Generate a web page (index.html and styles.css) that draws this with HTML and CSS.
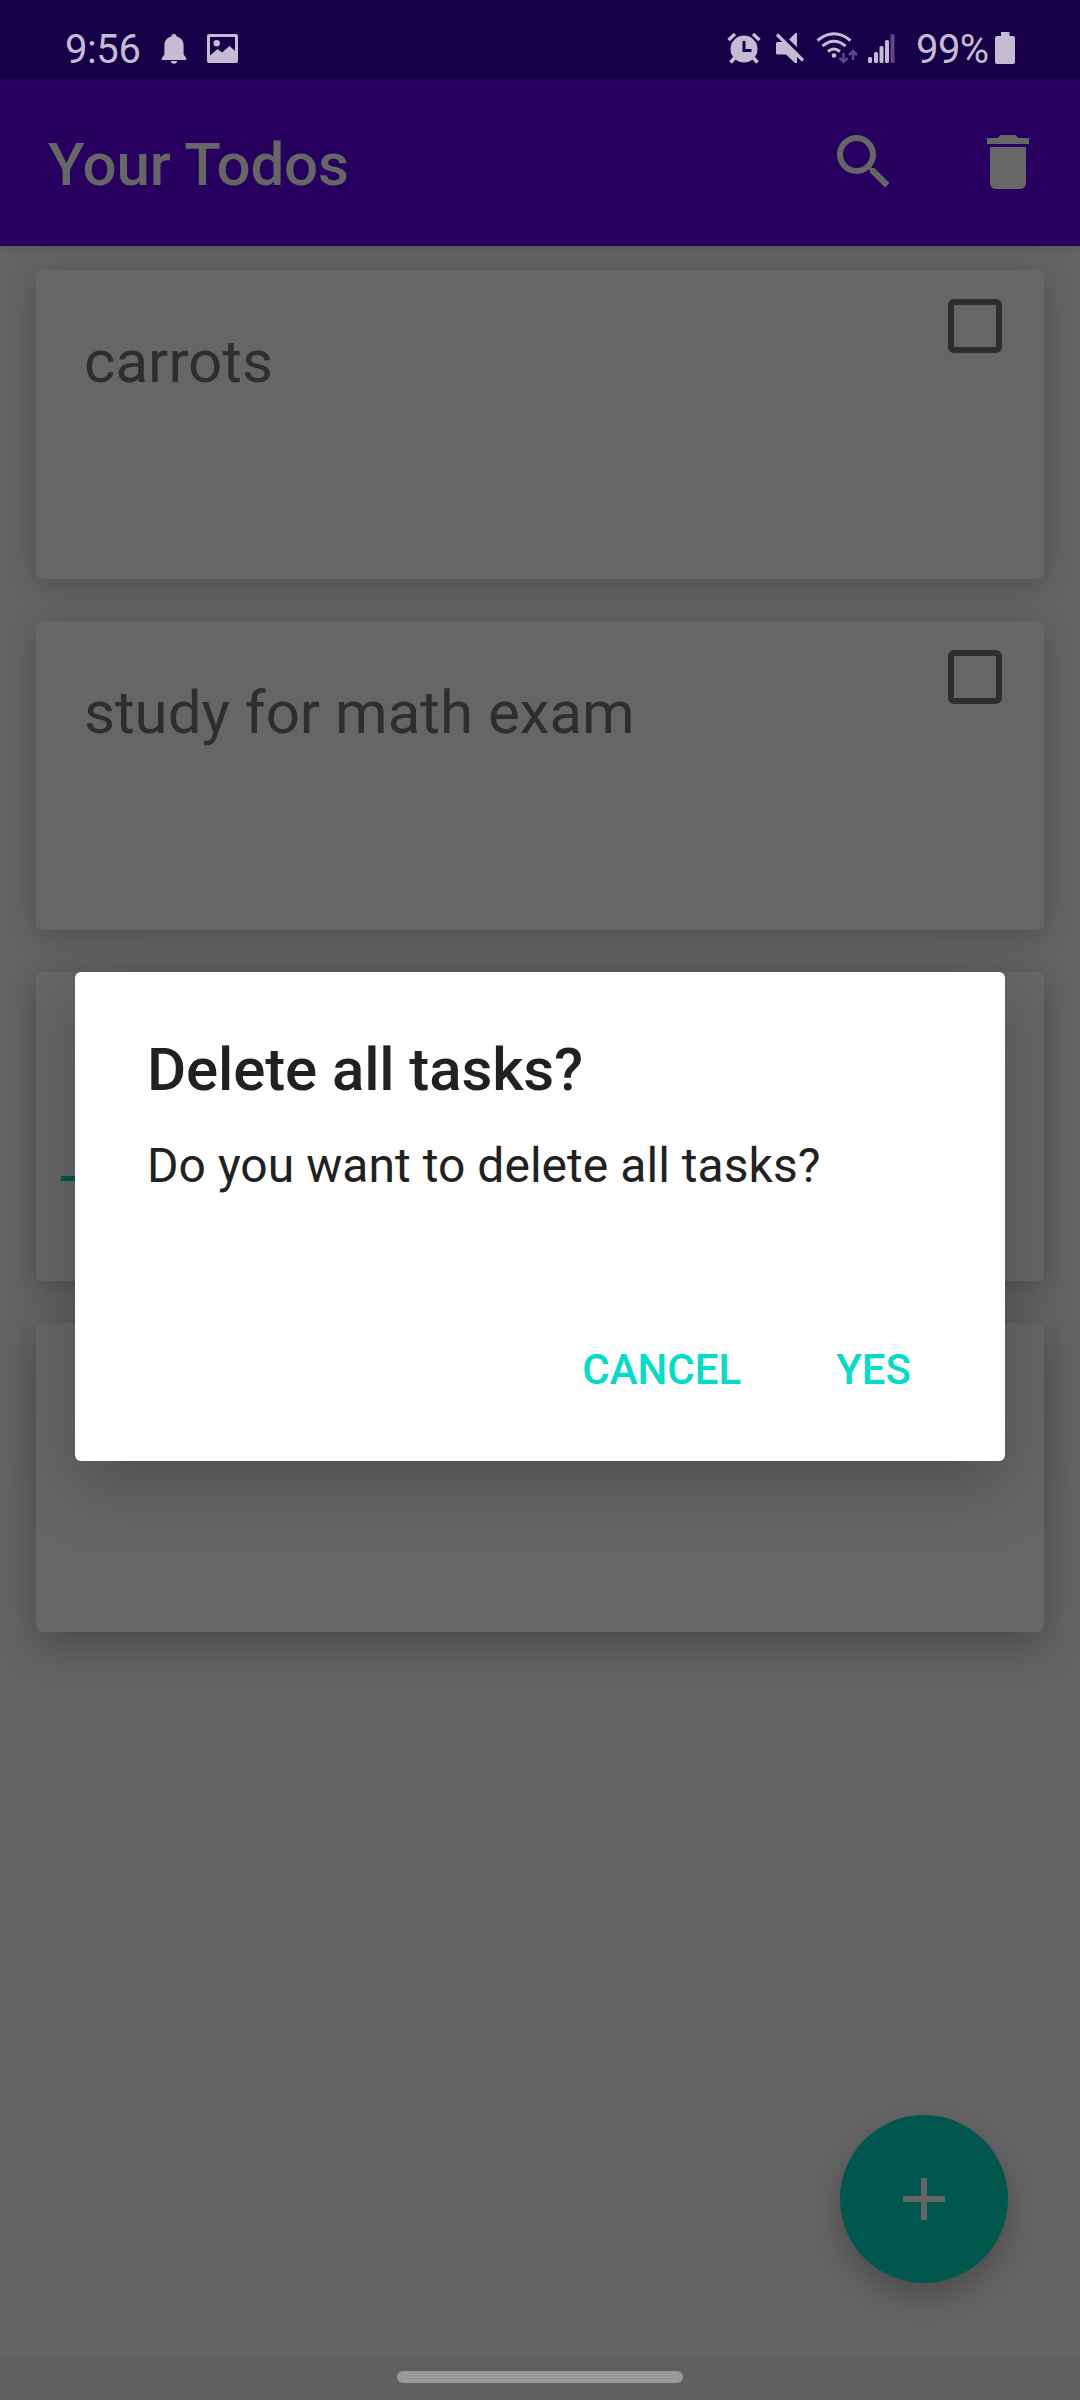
FILE: index.html
```html
<!DOCTYPE html>
<html lang="en">
<head>
<meta charset="utf-8">
<title>Your Todos</title>
<link rel="stylesheet" href="styles.css">
</head>
<body>
<div class="screen">
  <header class="status-bar">
    <span class="clock">9:56</span>
    <svg class="icon-bell" viewBox="0 0 26 30"><path d="M13 0c1.800 0 2.600 1.200 2.600 2.500 4.600 1.100 7 4.600 7 8.700v9.300l2.600 3.500v2H.8v-2l2.600-3.500v-9.300c0-4.100 2.400-7.600 7-8.700C10.400 1.200 11.200 0 13 0zM9.800 27h6.400c0 1.600-1.400 2.700-3.200 2.700S9.800 28.600 9.800 27z"/></svg>
    <svg class="icon-image" viewBox="0 0 31 29"><path fill-rule="evenodd" d="M2 0h27a2 2 0 0 1 2 2v25a2 2 0 0 1-2 2H2a2 2 0 0 1-2-2V2A2 2 0 0 1 2 0zM3 3v18.500l7.500-6.500 4.500 3.500 7.500-6.500 5.500 5V3zM9.700 6a3.200 3.200 0 1 1 0 6.400 3.200 3.200 0 0 1 0-6.400z"/></svg>
    <svg class="status-icons" viewBox="0 0 170 32">
      <g><circle cx="17" cy="17" r="13.500"/><path class="line" d="M1.500 8L8 2M32.500 8L26 2M7.500 26l-4 4.500M26.500 26l4 4.500"/><path class="cut" d="M17 9v9.500h7.500"/></g>
      <path d="M49 11.500a1.500 1.500 0 0 1 1.500-1.500H57L70 23.500V31h-2L59 22.500h-8.500A1.500 1.500 0 0 1 49 21zM62 7.500L68.500 1H70v14z"/><path class="slash" d="M50 2.500L76 28.500"/>
      <path class="arc" d="M90.500 8.500q16.500-13.500 33 0M95.500 14q11.500-9.500 23 0M101 19.500q6-5 12 0"/><circle cx="107" cy="23.500" r="2.300"/>
      <path class="dim-line" d="M116.500 21v9m-4-4l4 4 4-4M126 28v-9m-4 4l4-4 4 4"/>
      <rect x="141" y="25" width="4" height="6" rx="1.500"/><rect x="147" y="20" width="4" height="11" rx="1.500"/><rect x="152.500" y="14" width="4" height="17" rx="1.500"/><rect x="158" y="8" width="4" height="23" rx="1.500"/><rect class="dim" x="163.500" y="2" width="4" height="29" rx="1.500"/>
    </svg>
    <span class="battery-level">99%</span>
    <svg class="icon-battery" viewBox="0 0 20 32"><path d="M6 0h8.500v4H18a2 2 0 0 1 2 2v24a2 2 0 0 1-2 2H2a2 2 0 0 1-2-2V6a2 2 0 0 1 2-2h4z"/></svg>
  </header>
  <div class="app-bar">
    <h1 class="app-title">Your Todos</h1>
    <svg class="action" viewBox="0 0 24 24"><path d="M15.500 14h-.79l-.28-.27A6.471 6.471 0 0 0 16 9.500 6.500 6.500 0 1 0 9.500 16c1.610 0 3.090-.59 4.230-1.570l.27.28v.79l5 4.990L20.490 19l-4.990-5zm-6 0C7.010 14 5 11.990 5 9.500S7.010 5 9.500 5 14 7.010 14 9.500 11.990 14 9.500 14z"/></svg>
    <svg class="action" viewBox="0 0 24 24"><path d="M6 19c0 1.100.9 2 2 2h8c1.100 0 2-.9 2-2V7H6v12zM19 4h-3.500l-.71-.71c-.18-.18-.44-.29-.7-.29H9.910c-.26 0-.52.11-.7.290L8.500 4H5v2h14V4z"/></svg>
  </div>
  <main class="list">
    <article class="card"><p class="task">carrots</p><span class="checkbox"></span></article>
    <article class="card"><p class="task">study for math exam</p><span class="checkbox"></span></article>
    <article class="card card-divided"><span class="accent-line"></span></article>
    <article class="card card-last"></article>
  </main>
  <footer class="nav-bar"><span class="handle"></span></footer>
  <div class="fab"><svg class="plus" viewBox="0 0 42 42"><path d="M18 0h6v18h18v6H24v18h-6V24H0v-6h18z"/></svg></div>
  <section class="dialog">
    <h2 class="dialog-title">Delete all tasks?</h2>
    <p class="dialog-message">Do you want to delete all tasks?</p>
    <div class="dialog-actions"><span>CANCEL</span><span>YES</span></div>
  </section>
</div>
</body>
</html>
```
FILE: styles.css
```css
* { box-sizing: border-box; }
body { margin: 0; font-family: Roboto, sans-serif; }
h1, h2, p { margin: 0; }
.screen {
  position: relative;
  display: flex;
  flex-direction: column;
  width: 1080px;
  height: 2400px;
  overflow: hidden;
  background: #646464;
}
.status-bar {
  display: flex;
  align-items: flex-start;
  height: 78px;
  padding: 0 65px;
  background: #170047;
  color: #c3bcd2;
  fill: #c3bcd2;
  font-size: 40px;
  line-height: 50px;
}
.clock { width: 96px; padding-top: 25px; letter-spacing: -0.4px; }
.icon-bell { width: 26px; height: 30px; margin-top: 34px; }
.icon-image { width: 31px; height: 29px; margin: 34px 0 0 20px; }
.status-icons { width: 170px; height: 32px; margin: 32px 0 0 489px; }
.line { stroke: #c3bcd2; stroke-width: 3.5; fill: none; }
.cut { stroke: #170047; stroke-width: 3; fill: none; }
.slash { stroke: #c3bcd2; stroke-width: 3.2; }
.arc { stroke: #c3bcd2; stroke-width: 3; fill: none; }
.dim-line { stroke: #5e4784; stroke-width: 2.5; fill: none; }
.dim { fill: #5e4784; }
.battery-level { width: 78px; margin-left: 19px; padding-top: 25px; letter-spacing: -0.6px; }
.icon-battery { width: 20px; height: 32px; margin: 32px 0 0 1px; }
.app-bar {
  display: flex;
  align-items: center;
  gap: 72px;
  height: 168px;
  padding: 0 36px 0 48px;
  background: #27005f;
  box-shadow: 0 2px 10px rgba(0, 0, 0, 0.15);
}
.app-title {
  flex: 1;
  padding-top: 5px;
  color: #666;
  font-size: 60px;
  font-weight: 500;
  letter-spacing: -0.15px;
  line-height: 70px;
}
.action { width: 72px; height: 72px; fill: #666; }
.list {
  display: flex;
  flex: 1;
  flex-direction: column;
  gap: 42px;
  padding: 24px 36px;
}
.card {
  display: flex;
  flex: none;
  align-items: flex-start;
  justify-content: space-between;
  height: 309px;
  padding: 29px 42px 0 48px;
  border-radius: 6px;
  background: #666;
  box-shadow: 0 6px 30px rgba(0, 0, 0, 0.22);
}
.card-last { box-shadow: 0 14px 40px rgba(0, 0, 0, 0.27); }
.task { padding-top: 28px; color: #2e2e2e; font-size: 60px; line-height: 70px; }
.checkbox { width: 54px; height: 54px; border: 6px solid #2e2e2e; border-radius: 6px; }
.card-divided { padding: 204px 25px 0; }
.accent-line { width: 54px; height: 5px; background: #02574f; }
.nav-bar {
  display: flex;
  justify-content: center;
  height: 45px;
  padding-top: 16px;
  background: #606060;
}
.handle { width: 286px; height: 12px; border-radius: 6px; background: #999; }
.fab {
  position: absolute;
  right: 72px;
  bottom: 117px;
  display: flex;
  align-items: center;
  justify-content: center;
  width: 168px;
  height: 168px;
  border-radius: 50%;
  background: #01574e;
  box-shadow: 0 14px 30px rgba(0, 0, 0, 0.24);
}
.plus { width: 42px; height: 42px; fill: #666; }
.dialog {
  position: absolute;
  top: 972px;
  left: 75px;
  width: 930px;
  height: 489px;
  padding: 63px 72px 0;
  border-radius: 6px;
  background: #fff;
  color: #212121;
  box-shadow: 0 24px 68px rgba(0, 0, 0, 0.22);
}
.dialog-title { font-size: 60px; font-weight: 500; letter-spacing: -0.12px; line-height: 70px; }
.dialog-message { margin-top: 33px; font-size: 48px; letter-spacing: 0.04px; line-height: 56px; }
.dialog-actions {
  display: flex;
  justify-content: flex-end;
  gap: 95px;
  margin-top: 151px;
  padding-right: 22px;
  color: #07dac6;
  font-size: 42px;
  font-weight: 500;
  line-height: 50px;
}
```
